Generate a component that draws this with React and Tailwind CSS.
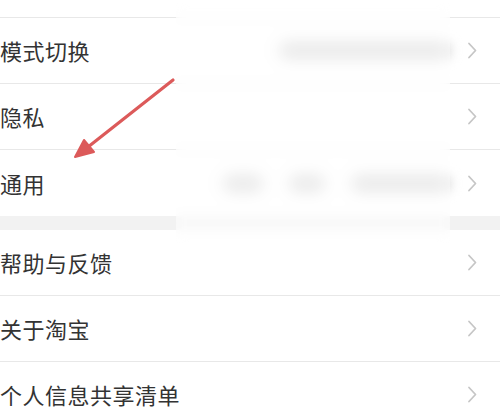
const topRows = [
  { label: "模式切换", values: ["w-[172px]"] },
  { label: "隐私", values: [] },
  { label: "通用", values: ["w-[40px]", "w-[36px]", "w-[100px]"] },
];
const bottomRows = ["帮助与反馈", "关于淘宝", "个人信息共享清单"];

function Chevron() {
  return (
    <svg width="11" height="17" viewBox="0 0 11 17" className="shrink-0">
      <path d="M2 1.5 L8.5 8.5 L2 15.5" fill="none" stroke="#c6c6c6" strokeWidth="1.8" strokeLinecap="round" strokeLinejoin="round" />
    </svg>
  );
}

function Row({ label, values = [], last }) {
  return (
    <div className={`flex h-[66px] items-center pr-[22px] ${last ? "" : "border-b border-[#e8e8e8]"}`}>
      <span className="text-[22px] tracking-[0.5px] text-[#333333]">{label}</span>
      <div className="ml-auto mr-[16px] flex items-center gap-[26px]">
        {values.map((w, i) => (
          <div key={i} className={`h-[17px] rounded-full bg-[#d6d6d6] blur-[6px] ${w}`} />
        ))}
      </div>
      <Chevron />
    </div>
  );
}

export default function App() {
  return (
    <div
      className="relative h-[412px] w-[500px] overflow-hidden bg-white"
      style={{ fontFamily: '"Noto Sans CJK SC", "Noto Sans", sans-serif' }}
    >
      <div className="h-[18px] border-b border-[#e8e8e8]" />
      {topRows.map((r, i) => (
        <Row key={r.label} label={r.label} values={r.values} last={i === topRows.length - 1} />
      ))}
      <div className="h-[14px] bg-[#f2f2f2]" />
      {bottomRows.map((r) => (
        <Row key={r} label={r} />
      ))}

      {/* mosaic wash over the hidden values */}
      <div className="absolute left-[176px] top-0 h-[246px] w-[274px] bg-white/45 backdrop-blur-[6px]" />

      {/* annotation arrow */}
      <svg className="absolute left-0 top-0" width="500" height="412" viewBox="0 0 500 412">
        <line x1="173" y1="80" x2="88" y2="147" stroke="#dc5a5a" strokeWidth="3.2" strokeLinecap="round" />
        <polygon points="75,157 84,140 94,152" fill="#dc5a5a" stroke="#dc5a5a" strokeWidth="2" strokeLinejoin="round" />
      </svg>
    </div>
  );
}
